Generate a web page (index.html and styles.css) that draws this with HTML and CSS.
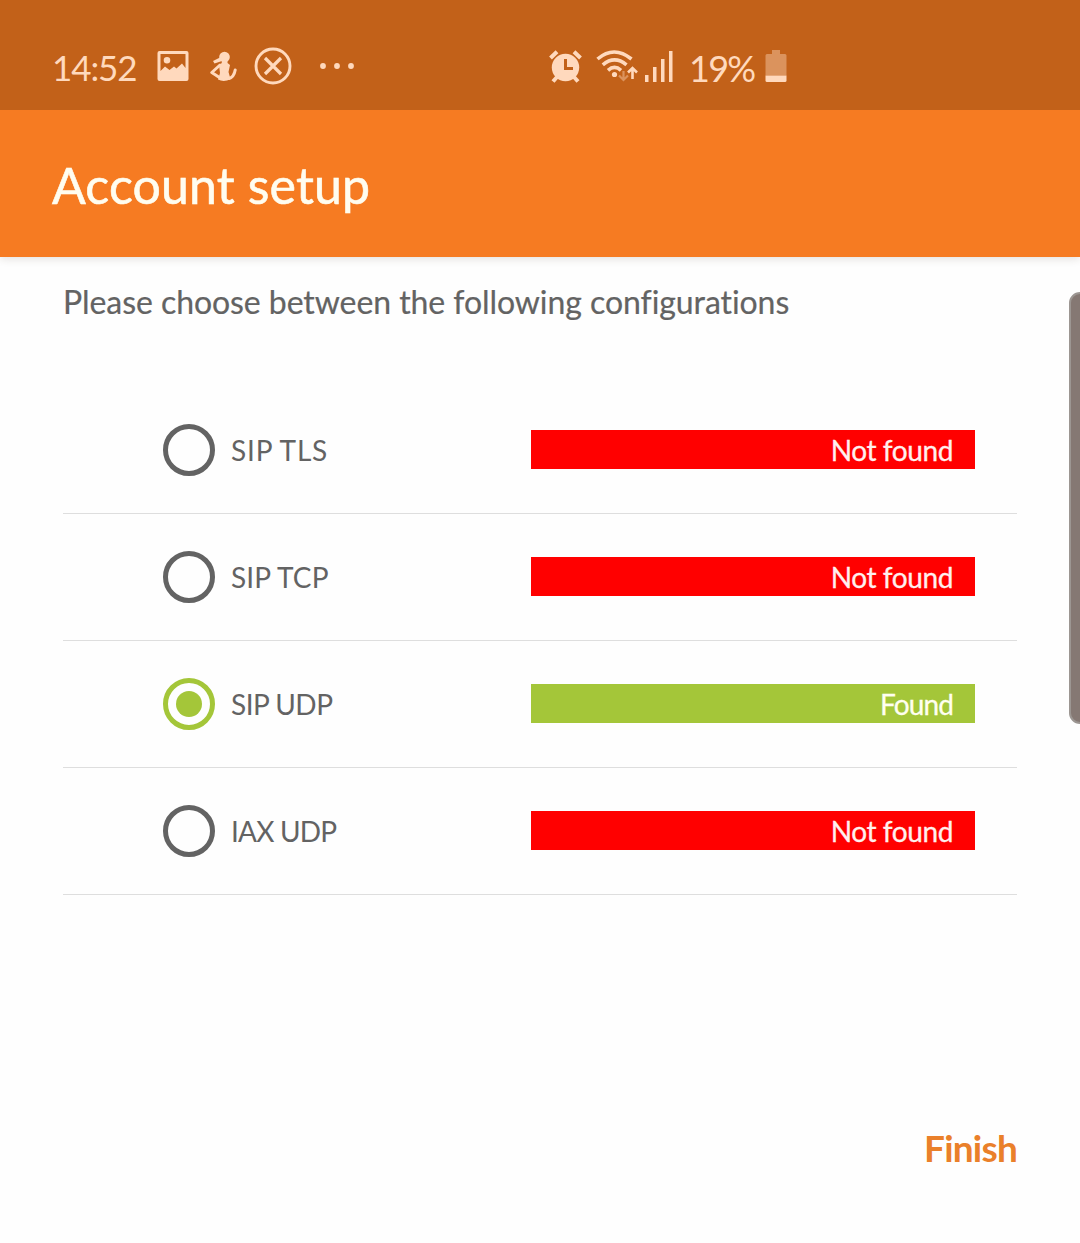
FILE: index.html
```html
<!DOCTYPE html>
<html lang="en">
<head>
<meta charset="utf-8">
<title>Account setup</title>
<link rel="stylesheet" href="styles.css">
</head>
<body>
<div class="status-bar">
  <div class="status-left">
    <span class="clock">14:52</span>
    <svg class="icon-picture" width="32" height="30" viewBox="0 0 32 30"><path fill="currentColor" fill-rule="evenodd" d="M2.500 0H29.500Q31.500 0 31.500 2V28Q31.500 30 29.500 30H2.500Q.5 30 .5 28V2Q.5 0 2.500 0ZM3.500 3V20L8 15.500L12.500 19L17 15.500L19.500 17.500L25 12.500L28.500 17V3ZM10 6a3.300 3.300 0 1 1 0 6.600a3.300 3.300 0 0 1 0-6.600Z"/></svg>
    <svg class="icon-runner" width="27" height="31" viewBox="0 0 27 31"><g fill="currentColor"><circle cx="14.500" cy="6" r="5.300"/><path d="M11 6L3 10L4.500 12.500L12 10Z"/><path d="M12 8H17.500V12L20 14L18.500 21L20.500 28Q14 31.500 8 28.500L10 22L9 14Q12 13 12 10Z"/></g><path fill="none" stroke="currentColor" stroke-width="3" stroke-linecap="round" stroke-linejoin="round" d="M10 14L1.800 21.500L9.500 26.500M19 27.500Q24 26 25.200 19"/></svg>
    <svg class="icon-cancel" width="38" height="38" viewBox="0 0 38 38" fill="none" stroke="currentColor" stroke-width="2.900"><circle cx="19" cy="19" r="17"/><path d="M11 11L27 27M27 11L11 27" stroke-width="3.200"/></svg>
    <svg class="icon-more" width="36" height="6" viewBox="0 0 36 6" fill="currentColor"><circle cx="3" cy="3" r="2.900"/><circle cx="17" cy="3" r="2.900"/><circle cx="31" cy="3" r="2.900"/></svg>
  </div>
  <div class="status-right">
    <svg class="icon-alarm" width="33" height="33" viewBox="0 0 33 33"><circle cx="16.500" cy="17.500" r="13.700" fill="currentColor"/><path fill="none" stroke="currentColor" stroke-width="4" d="M1.500 8L8 1.800M25 1.800L31.500 8M8 27L4 31.500M25 27L29 31.500"/><path class="alarm-hands" d="M16.500 9V18.500H24"/></svg>
    <svg class="icon-wifi" width="43" height="32" viewBox="0 0 43 32" fill="none" stroke="currentColor" stroke-width="3.600"><path d="M1.500 9Q18 -5 35.500 9M6.800 14.800Q18.500 5 30.500 14.800M12 20.300Q18.500 14.500 25 20.300"/><circle cx="18.500" cy="24.500" r="2.600" fill="currentColor" stroke="none"/><path opacity=".42" stroke-width="2.200" d="M27.500 21V30M23 25.500L27.500 30L32 25.500"/><path stroke-width="2.600" d="M36.500 29V18M32 22.500L36.500 18L41 22.500"/></svg>
    <svg class="icon-signal" width="28" height="31" viewBox="0 0 28 31" fill="currentColor"><rect x="0" y="24" width="3.500" height="7"/><rect x="8" y="16" width="3.500" height="15"/><rect x="16" y="8" width="3.500" height="23"/><rect x="24" y="0" width="3.500" height="31"/></svg>
    <span class="battery-level">19%</span>
    <svg class="icon-battery" width="22" height="33" viewBox="0 0 22 33" fill="currentColor"><path opacity=".42" d="M7 0H15V4H20Q21.500 4 21.500 5.500V25.500H.5V5.500Q.5 4 2 4H7Z"/><path d="M.5 25.500H21.500V30.500Q21.500 32 20 32H2Q.5 32 .5 30.500Z"/></svg>
  </div>
</div>
<header class="app-bar"><h1 class="title">Account setup</h1></header>
<main class="content">
  <p class="prompt">Please choose between the following configurations</p>
  <div class="options">
    <div class="option"><span class="radio"></span><span class="label loose">SIP TLS</span><span class="result">Not found</span></div>
    <div class="option"><span class="radio"></span><span class="label">SIP TCP</span><span class="result">Not found</span></div>
    <div class="option"><span class="radio selected"></span><span class="label tight">SIP UDP</span><span class="result found">Found</span></div>
    <div class="option"><span class="radio"></span><span class="label tighter">IAX UDP</span><span class="result">Not found</span></div>
  </div>
  <div class="actions"><span class="finish">Finish</span></div>
</main>
<div class="edge-handle"></div>
</body>
</html>
```
FILE: styles.css
```css
* { box-sizing: border-box; }
body { margin: 0; width: 1080px; height: 1243px; overflow: hidden; position: relative; background: #fefefe; color: #636363; font-family: Lato, "Open Sans", sans-serif; white-space: nowrap; }
svg { display: block; flex: none; }
.status-bar { height: 110px; padding: 21px 0 0 52px; display: flex; position: relative; z-index: 1; background: #c26119; color: #ffd9bd; }
.status-left, .status-right { display: flex; align-items: center; height: 90px; }
.status-left { width: 497px; }
.clock { width: 105px; font-size: 35px; letter-spacing: -1.1px; padding-top: 1px; }
.icon-picture { margin-right: 21px; }
.icon-runner { margin-right: 17px; }
.icon-cancel { margin-right: 28px; }
.icon-alarm { margin-right: 14px; }
.icon-wifi { margin-right: 6px; }
.icon-signal { margin-right: 16px; }
.alarm-hands { fill: none; stroke: #c26119; stroke-width: 3; }
.battery-level { width: 76px; font-size: 36px; letter-spacing: -1.7px; padding-top: 3px; }
.app-bar { height: 147px; padding: 2px 52px 0; display: flex; align-items: center; background: #f67b22; box-shadow: 0 2px 8px rgba(70, 50, 30, .14); }
.title { margin: 0; font-size: 50px; font-weight: 400; line-height: 60px; letter-spacing: .15px; color: #fffdf0; -webkit-text-stroke: .6px; }
.content { padding: 25px 63px 0; }
.prompt { margin: 0; height: 105px; font-size: 32px; line-height: 40px; letter-spacing: -.07px; -webkit-text-stroke: .2px; }
.option { height: 127px; padding: 0 42px 1px 100px; display: flex; align-items: center; border-bottom: 1px solid #dedede; }
.radio { width: 52px; height: 52px; border: 5px solid #636363; border-radius: 50%; display: grid; place-items: center; }
.selected { border-color: #a4c639; }
.selected::after { content: ""; width: 26px; height: 26px; border-radius: 50%; background: #a4c639; }
.label { margin-left: 16px; font-size: 28px; line-height: 36px; padding-top: 1px; letter-spacing: .15px; }
.loose { letter-spacing: .8px; }
.tight { letter-spacing: -.5px; }
.tighter { letter-spacing: -.8px; }
.result { margin-left: auto; width: 444px; height: 39px; padding: 1px 22px 0 0; background: #f00; color: #fff0ee; font-size: 28px; line-height: 38px; letter-spacing: -.4px; text-align: right; -webkit-text-stroke: .3px; }
.found { background: #a4c639; color: #fffff0; letter-spacing: -.9px; }
.actions { padding-top: 229px; display: flex; justify-content: flex-end; }
.finish { color: #ea802a; font-size: 37px; font-weight: 700; line-height: 48px; letter-spacing: -.8px; }
.edge-handle { position: absolute; right: -11px; top: 292px; width: 22px; height: 432px; border: 2px solid #9c9692; border-radius: 11px; background: #857873; }
```
